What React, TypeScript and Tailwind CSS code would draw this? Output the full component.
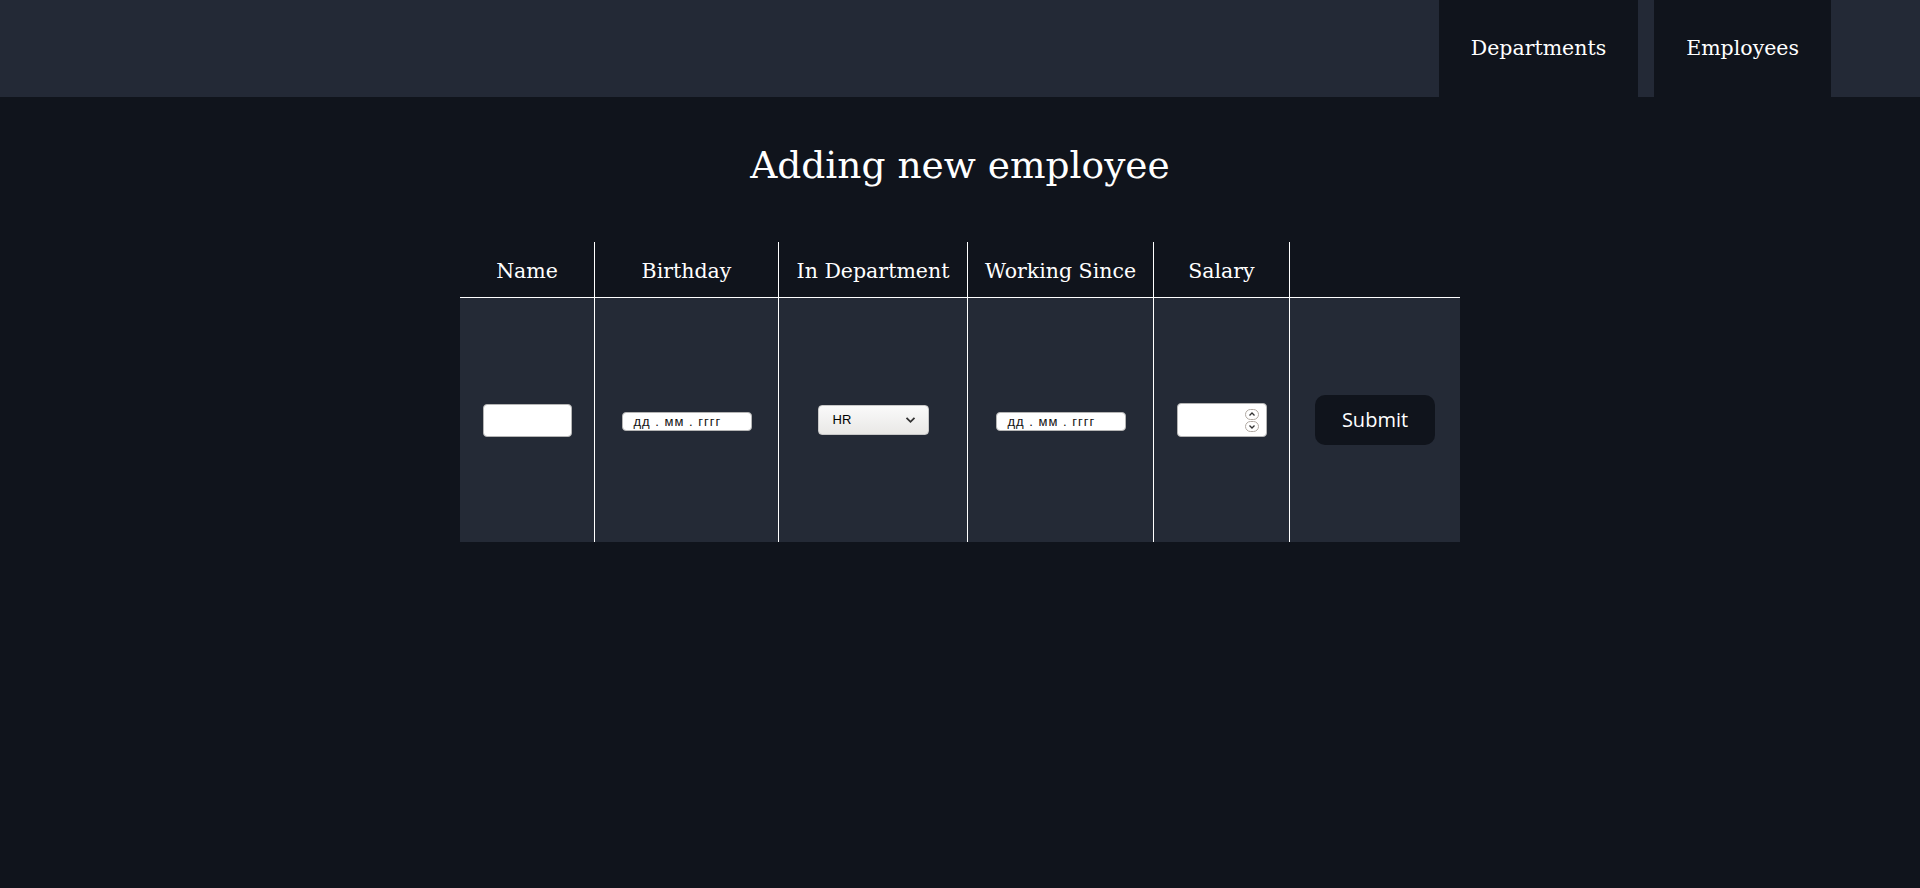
import React from "react";

const serif = { fontFamily: '"DejaVu Serif", serif' };

function FakeDate() {
  return (
    <div className="w-[130px] h-[19px] mt-[2px] bg-white rounded-[4px] border border-[#b5b5b5] overflow-hidden relative">
      <div
        className="absolute left-[11px] top-[1px] text-[13px] leading-[16px] tracking-[1px] text-[#111] whitespace-pre"
        style={{ fontFamily: '"Liberation Sans", Arial, sans-serif' }}
      >
        дд . мм . гггг
      </div>
    </div>
  );
}

function Spinner() {
  return (
    <div className="flex flex-col gap-[1px] w-[14px]">
      <svg width="14" height="11" viewBox="0 0 14 11">
        <rect x="0.5" y="0.5" width="13" height="10" rx="5" fill="white" stroke="#b0a9a2" />
        <path d="M4.5 6.5 L7 4 L9.5 6.5" fill="none" stroke="#333" strokeWidth="1.3" />
      </svg>
      <svg width="14" height="11" viewBox="0 0 14 11">
        <rect x="0.5" y="0.5" width="13" height="10" rx="5" fill="white" stroke="#b0a9a2" />
        <path d="M4.5 4.5 L7 7 L9.5 4.5" fill="none" stroke="#333" strokeWidth="1.3" />
      </svg>
    </div>
  );
}

export default function App() {
  const headers = ["Name", "Birthday", "In Department", "Working Since", "Salary", ""];
  const widths = ["w-[134px]", "w-[184px]", "w-[189px]", "w-[186px]", "w-[136px]", "w-[171px]"];
  return (
    <div className="min-h-[888px] bg-[#10141c] text-white" style={serif}>
      <header className="h-[97px] bg-[#232936] flex justify-end items-stretch gap-4 pr-[89px]">
        <a className="bg-[#10141c] px-8 flex items-center text-[20.5px] text-white">Departments</a>
        <a className="bg-[#10141c] px-8 flex items-center text-[20.5px] text-white">Employees</a>
      </header>
      <main className="flex flex-col items-center">
        <h1 className="mt-[46px] text-[37.5px] leading-[45px] text-white">Adding new employee</h1>
        <div className="mt-[54px] w-[1000px]">
          <div className="flex h-[56px] border-b border-white">
            {headers.map((h, i) => (
              <div
                key={i}
                className={`${widths[i]} ${i > 0 ? "border-l border-white" : ""} flex items-center justify-center pt-[4px] text-[20.5px]`}
              >
                {h}
              </div>
            ))}
          </div>
          <div className="flex h-[244px] bg-[#242a36]">
            <div className={`${widths[0]} flex items-center justify-center`}>
              <div className="w-[89px] h-[33px] bg-white rounded-[4px] border border-[#b5b5b5]" />
            </div>
            <div className={`${widths[1]} border-l border-white flex items-center justify-center`}>
              <FakeDate />
            </div>
            <div className={`${widths[2]} border-l border-white flex items-center justify-center`}>
              <div
                className="w-[111px] h-[30px] rounded-[4px] border border-[#c8c8c8] bg-gradient-to-b from-[#fafafa] to-[#e9e8e6] flex items-center justify-between pl-[14px] pr-[12px] text-[13px] text-black"
                style={{ fontFamily: '"Liberation Sans", Arial, sans-serif' }}
              >
                <span>HR</span>
                <svg width="11" height="8" viewBox="0 0 11 8">
                  <path d="M1.5 1.8 L5.5 5.8 L9.5 1.8" fill="none" stroke="#333" strokeWidth="1.8" />
                </svg>
              </div>
            </div>
            <div className={`${widths[3]} border-l border-white flex items-center justify-center`}>
              <FakeDate />
            </div>
            <div className={`${widths[4]} border-l border-white flex items-center justify-center`}>
              <div className="w-[90px] h-[34px] bg-white rounded-[4px] border border-[#b5b5b5] flex items-center justify-end pr-[7px]">
                <Spinner />
              </div>
            </div>
            <div className={`${widths[5]} border-l border-white flex items-center justify-center`}>
              <button
                className="w-[120px] h-[50px] rounded-[10px] bg-[#10141c] text-white text-[20px]"
                style={{ fontFamily: '"Open Sans", sans-serif' }}
              >
                Submit
              </button>
            </div>
          </div>
        </div>
      </main>
    </div>
  );
}
